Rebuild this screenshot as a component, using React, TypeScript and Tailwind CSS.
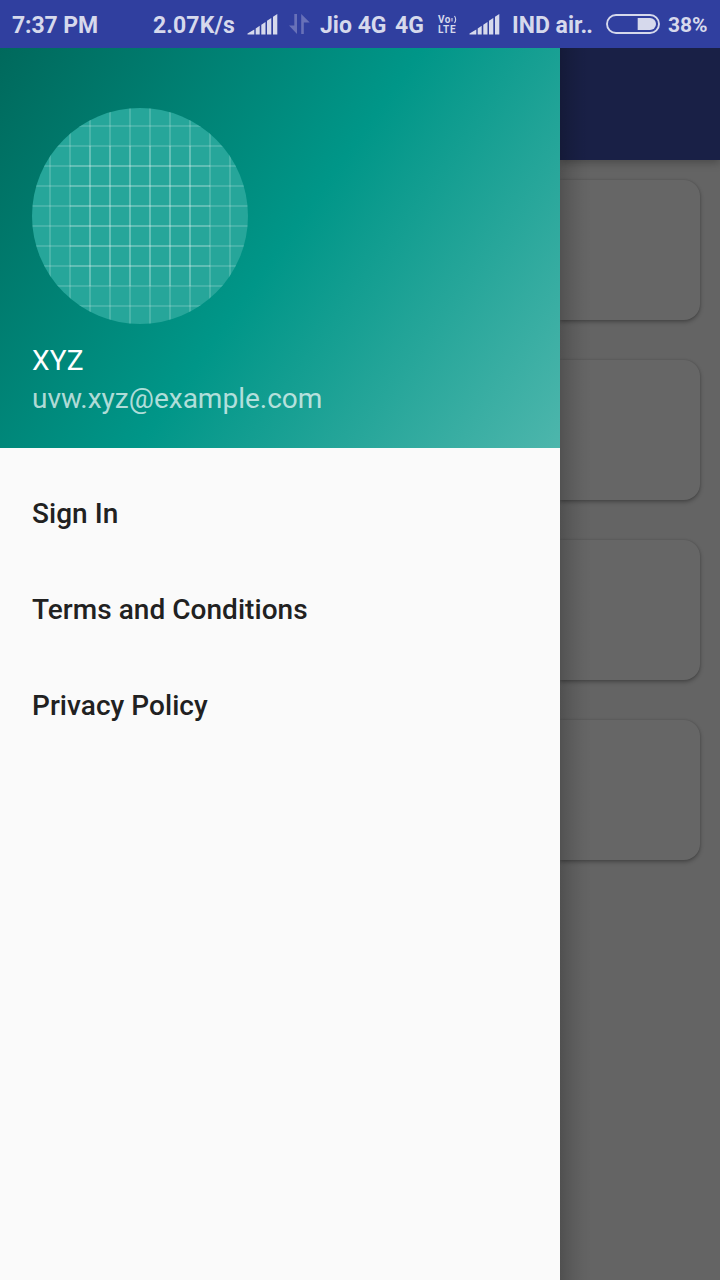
const LINES = [9, 19, 29, 39, 49, 59, 69, 79, 89, 99];
const INNER = [29, 39, 49, 59, 69, 79];

function Signal() {
  return (
    <svg className="h-[22px] w-[31px] shrink-0" viewBox="0 0 31 22" fill="currentColor">
      <path d="M0.500 21.500V20.500L7.300 16.500V21.500ZM8.700 15.500 12.700 12.800V21.500H8.700ZM14.300 11.800 18.500 9V21.500H14.300ZM20 7.800 24.300 5V21.500H20ZM26 3.800 30.300 1V21.500H26Z" />
    </svg>
  );
}

function StatusBar() {
  return (
    <header className="relative z-20 flex h-12 w-full items-center bg-[#303f9f] text-[23px] leading-none font-bold whitespace-nowrap text-[#d6d9ec]">
      <span className="ml-3 w-[141px] pt-[3px] tracking-[-0.1px]">7:37 PM</span>
      <span className="w-[94px] pt-[3px] tracking-[0.1px]">2.07K/s</span>
      <span className="w-[42px]"><Signal /></span>
      <svg className="mr-[10px] h-5 w-[21px] shrink-0 text-[#6871b8]" viewBox="0 0 21 20" fill="currentColor">
        <path d="M5.300 0H8V20L0 11.500H5.300ZM12.200 0 20.700 8.500H14.800V20H12.200Z" />
      </svg>
      <span className="w-[75px] pt-[3px]">Jio 4G</span>
      <span className="w-[42px] pt-[3px]">4G</span>
      <span className="flex w-[32px] flex-col gap-px pl-px text-[10px] leading-[9px]">
        <span className="flex tracking-[0.4px]">Vo
          <svg className="h-[9px] w-[6px]" viewBox="0 0 6 9" fill="none" stroke="currentColor" strokeWidth="1.1">
            <path d="M1 3V6.500M3.500 1Q5.800 4.500 3.500 8" />
          </svg>
        </span>
        <span className="tracking-[0.8px]">LTE</span>
      </span>
      <span className="w-[43px]"><Signal /></span>
      <span className="w-[94px] pt-[3px]">IND air<span className="-ml-[2px] tracking-[-0.900px]">..</span></span>
      <svg className="h-5 w-[54px] shrink-0" viewBox="0 0 54 20">
        <rect x="1" y="1" width="52" height="18" rx="9" fill="none" stroke="currentColor" strokeWidth="1.900" />
        <path d="M31.700 4H44A6 6 0 0 1 44 16H31.700Z" fill="currentColor" />
      </svg>
      <span className="ml-2 pt-0.5 text-[21px]">38%</span>
    </header>
  );
}

function Avatar() {
  return (
    <svg className="size-[216px]" viewBox="0 0 108 108">
      <clipPath id="round"><circle cx="54" cy="54" r="54" /></clipPath>
      <g clipPath="url(#round)" stroke="#ffffff" strokeOpacity="0.2" strokeWidth="0.8">
        <rect width="108" height="108" fill="#26a69a" stroke="none" />
        {LINES.map((n) => <path key={`v${n}`} d={`M${n} 0V108`} />)}
        {LINES.map((n) => <path key={`h${n}`} d={`M0 ${n}H108`} />)}
        {INNER.map((n) => <path key={`ih${n}`} d={`M19 ${n}H89`} />)}
        {INNER.map((n) => <path key={`iv${n}`} d={`M${n} 19V89`} />)}
      </g>
    </svg>
  );
}

function Drawer() {
  return (
    <aside className="relative z-10 flex w-[560px] shrink-0 flex-col bg-[#fafafa]">
      <div className="flex h-[400px] flex-col bg-[linear-gradient(125.54deg,#00695c,#009688_50%,#4db6ac)] px-8 pt-[60px] text-[28px]">
        <Avatar />
        <div className="mt-4 leading-[41px] tracking-[0.2px] text-white">XYZ</div>
        <div className="leading-[35px] text-white/70">uvw.xyz@example.com</div>
      </div>
      <nav className="flex flex-col pt-[17px] text-[28px] font-medium tracking-[0.040px] text-[#212121]">
        {["Sign In", "Terms and Conditions", "Privacy Policy"].map((label) => (
          <a key={label} className="flex h-24 items-center px-8 pt-0.5">{label}</a>
        ))}
      </nav>
      <div className="absolute inset-y-0 left-full w-8 bg-[linear-gradient(to_right,rgba(0,0,0,0.2),rgba(0,0,0,0.1)_35%,rgba(0,0,0,0.03)_70%,transparent)]" />
    </aside>
  );
}

export default function App() {
  return (
    <div className="flex h-[1280px] w-[720px] flex-col overflow-hidden font-['Roboto',sans-serif]">
      <StatusBar />
      <div className="flex grow">
        <Drawer />
        <main className="flex w-40 shrink-0 flex-col bg-[#646464]">
          <div className="h-28 bg-[#192046] shadow-[0_3px_8px_rgba(0,0,0,0.25)]" />
          <div className="flex flex-col gap-10 pt-5 pr-5">
            {[0, 1, 2, 3].map((n) => (
              <div key={n} className="h-[140px] rounded-r-2xl bg-[#666666] shadow-[0_2px_4px_rgba(0,0,0,0.3),0_0_2px_rgba(0,0,0,0.15)]" />
            ))}
          </div>
        </main>
      </div>
    </div>
  );
}
